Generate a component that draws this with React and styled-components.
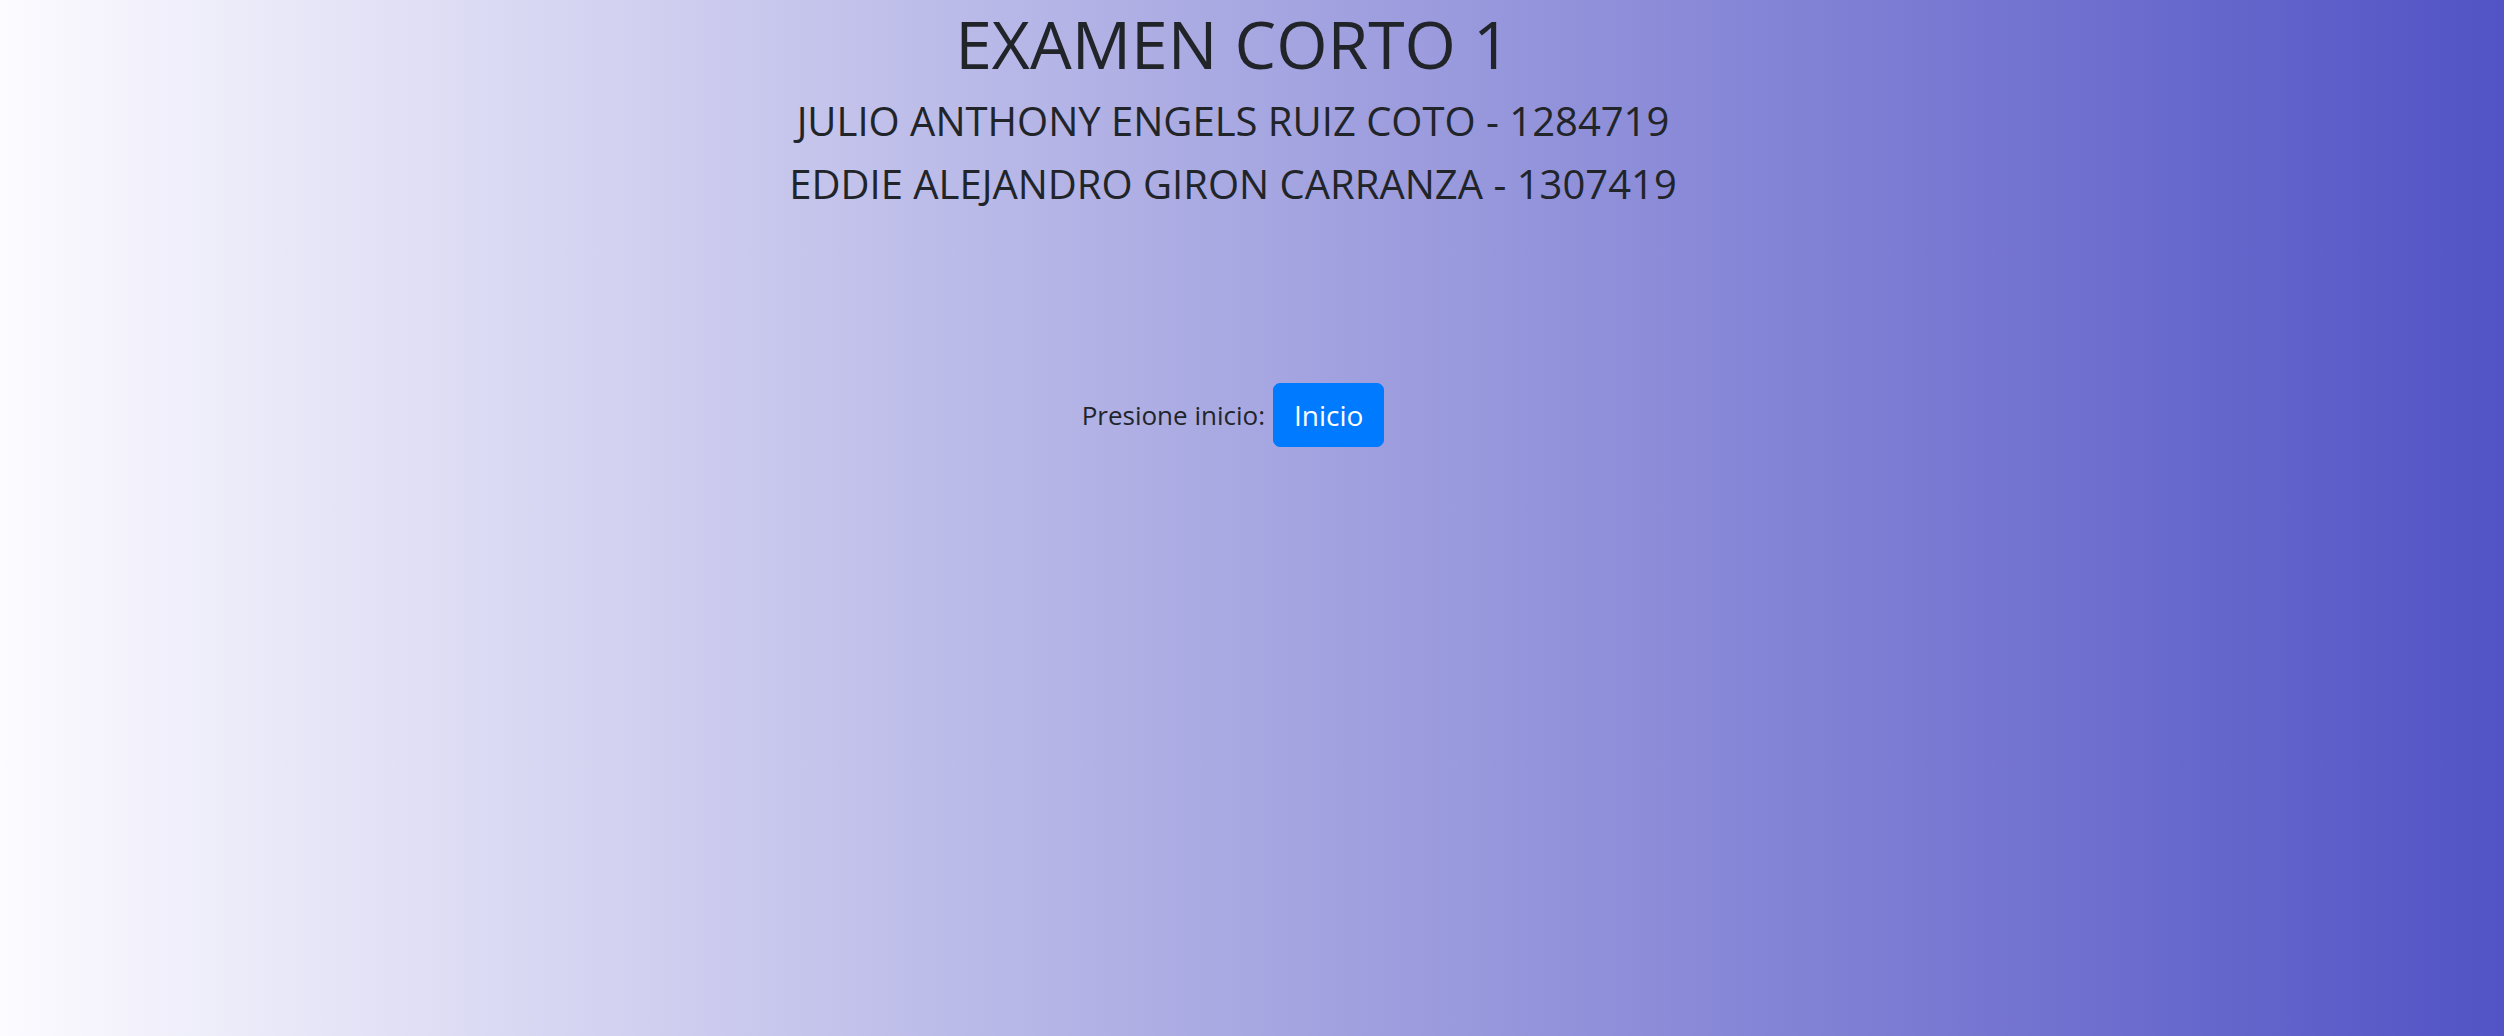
import React from "react";
import styled, { createGlobalStyle } from "styled-components";

const GlobalStyle = createGlobalStyle`
  html, body {
    margin: 0;
    padding: 0;
  }
  body {
    font-family: "Open Sans", "Noto Sans", sans-serif;
    color: #212529;
  }
`;

const Page = styled.main`
  width: 2504px;
  height: 1036px;
  box-sizing: border-box;
  padding: 4px 38px 0 0;
  background: linear-gradient(to right, #fcfbff, #5253c5);
  display: flex;
  flex-direction: column;
  align-items: center;
`;

const Title = styled.h1`
  margin: 0 0 6px;
  font-size: 66px;
  font-weight: 400;
  line-height: 79px;
`;

const Student = styled.h3`
  margin: 0;
  font-size: 40px;
  font-weight: 400;
  line-height: 63px;
`;

const StartRow = styled.div`
  margin-top: 168px;
  display: flex;
  align-items: center;
  gap: 8px;
  font-size: 26px;
`;

const Button = styled.button`
  font-family: inherit;
  font-size: 28px;
  color: #fff;
  background: #007bff;
  border: 1px solid #007bff;
  border-radius: 7px;
  height: 64px;
  padding: 0 20px;
  cursor: pointer;
`;

export default function App() {
  return (
    <>
      <GlobalStyle />
      <Page>
        <Title>EXAMEN CORTO 1</Title>
        <Student>JULIO ANTHONY ENGELS RUIZ COTO - 1284719</Student>
        <Student>EDDIE ALEJANDRO GIRON CARRANZA - 1307419</Student>
        <StartRow>
          <span>Presione inicio:</span>
          <Button>Inicio</Button>
        </StartRow>
      </Page>
    </>
  );
}
